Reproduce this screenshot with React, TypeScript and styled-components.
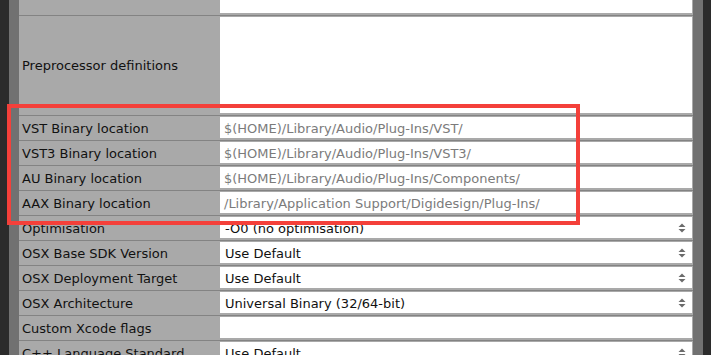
import React from "react";
import styled, { createGlobalStyle } from "styled-components";

const Global = createGlobalStyle`
  html, body { margin: 0; padding: 0; background: #2b2b2b; overflow: hidden; }
  body { width: 711px; height: 355px; }
`;

const Frame = styled.div`
  display: flex;
  width: 711px;
  height: 355px;
  overflow: hidden;
  position: relative;
  background: #2b2b2b;
  font-family: "DejaVu Sans", "Liberation Sans", sans-serif;
  font-size: 13px;
`;

const DarkEdge = styled.div<{ $w: number }>`
  width: ${(p) => p.$w}px;
  flex: none;
  background: #2b2b2b;
`;

const Gutter = styled.div`
  width: 10px;
  flex: none;
  background: #717171;
`;

const Panel = styled.div`
  width: 674px;
  flex: none;
  background: #a9a9a9;
  display: flex;
  flex-direction: column;
  margin-top: -10px;
`;

const Row = styled.div<{ $tall?: boolean }>`
  display: grid;
  grid-template-columns: 201px 472px;
  height: ${(p) => (p.$tall ? 100 : 25)}px;
  box-sizing: border-box;
  border-top: 1px solid #838383;
  padding: 1px 1px 2px 0;
  flex: none;
`;

const Label = styled.div`
  display: flex;
  align-items: center;
  padding-left: 3px;
  padding-top: 1px;
  color: #111;
  white-space: nowrap;
`;

const Field = styled.div<{ $muted?: boolean }>`
  background: #fff;
  display: flex;
  align-items: center;
  padding-left: ${(p) => (p.$muted ? 4 : 5)}px;
  padding-top: 1px;
  color: ${(p) => (p.$muted ? "#7b7b7b" : "#111")};
  white-space: nowrap;
  position: relative;
`;

const Stepper = styled.svg`
  position: absolute;
  right: 6px;
  top: 50%;
  margin-top: -5px;
`;

const Highlight = styled.div`
  position: absolute;
  left: 7px;
  top: 104px;
  width: 573px;
  height: 121px;
  box-sizing: border-box;
  border: 4px solid #f4403a;
  pointer-events: none;
`;

type Item = { label: string; value?: string; muted?: boolean; combo?: boolean; tall?: boolean };

const items: Item[] = [
  { label: "" },
  { label: "Preprocessor definitions", tall: true },
  { label: "VST Binary location", value: "$(HOME)/Library/Audio/Plug-Ins/VST/", muted: true },
  { label: "VST3 Binary location", value: "$(HOME)/Library/Audio/Plug-Ins/VST3/", muted: true },
  { label: "AU Binary location", value: "$(HOME)/Library/Audio/Plug-Ins/Components/", muted: true },
  { label: "AAX Binary location", value: "/Library/Application Support/Digidesign/Plug-Ins/", muted: true },
  { label: "Optimisation", value: "-O0 (no optimisation)", combo: true },
  { label: "OSX Base SDK Version", value: "Use Default", combo: true },
  { label: "OSX Deployment Target", value: "Use Default", combo: true },
  { label: "OSX Architecture", value: "Universal Binary (32/64-bit)", combo: true },
  { label: "Custom Xcode flags" },
  { label: "C++ Language Standard", value: "Use Default", combo: true },
];

const Arrows = () => (
  <Stepper width="8" height="10" viewBox="0 0 8 10">
    <path d="M4 0.5 L7.5 4 L0.5 4 Z" fill="#6b6b6b" />
    <path d="M4 9.5 L7.5 6 L0.5 6 Z" fill="#6b6b6b" />
  </Stepper>
);

export default function App() {
  return (
    <>
      <Global />
      <Frame>
        <DarkEdge $w={9} />
        <Gutter />
        <Panel>
          {items.map((it, i) => (
            <Row key={i} $tall={it.tall}>
              <Label>{it.label}</Label>
              <Field $muted={it.muted}>
                {it.value}
                {it.combo && <Arrows />}
              </Field>
            </Row>
          ))}
        </Panel>
        <Gutter />
        <DarkEdge $w={8} />
        <Highlight />
      </Frame>
    </>
  );
}
